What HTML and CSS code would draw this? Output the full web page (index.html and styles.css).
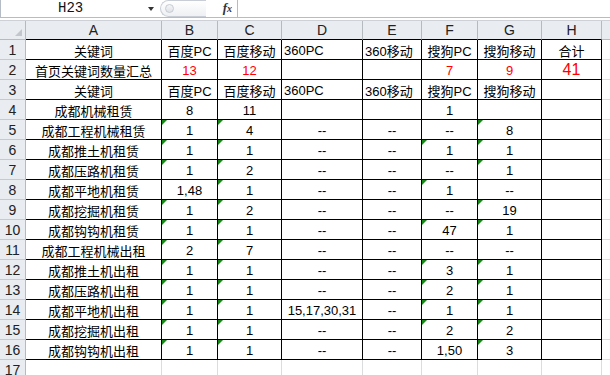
FILE: index.html
```html
<!DOCTYPE html>
<html lang="zh-CN">
<head>
<meta charset="utf-8">
<link rel="stylesheet" href="styles.css">
</head>
<body>
<div class="app">
  <div class="fbar">
    <div class="namebox"><span class="name">H23</span><span class="arrow"></span></div>
    <div class="splitter"><span class="dimple"></span></div>
    <div class="fx">f<span class="x">x</span></div>
    <div class="formula"></div>
  </div>
  <div class="gap"></div>
  <div class="sheet">
    <div class="corner"><span class="selall"></span></div>
    <div class="ch">A</div><div class="ch">B</div><div class="ch">C</div><div class="ch">D</div><div class="ch">E</div><div class="ch">F</div><div class="ch">G</div><div class="ch">H</div><div class="ch last"></div>

    <div class="rh">1</div>
    <div class="c">关键词</div><div class="c">百度PC</div><div class="c">百度移动</div><div class="c l">360PC</div><div class="c l">360移动</div><div class="c">搜狗PC</div><div class="c">搜狗移动</div><div class="c">合计</div><div class="g"></div>

    <div class="rh">2</div>
    <div class="c">首页关键词数量汇总</div><div class="c red">13</div><div class="c red">12</div><div class="c"></div><div class="c"></div><div class="c red">7</div><div class="c red">9</div><div class="c red big">41</div><div class="g"></div>

    <div class="rh">3</div>
    <div class="c">关键词</div><div class="c">百度PC</div><div class="c">百度移动</div><div class="c l">360PC</div><div class="c l">360移动</div><div class="c">搜狗PC</div><div class="c">搜狗移动</div><div class="c"></div><div class="g"></div>

    <div class="rh">4</div>
    <div class="c">成都机械租赁</div><div class="c">8</div><div class="c">11</div><div class="c"></div><div class="c"></div><div class="c">1</div><div class="c"></div><div class="c"></div><div class="g"></div>

    <div class="rh">5</div>
    <div class="c">成都工程机械租赁</div><div class="c t">1</div><div class="c t">4</div><div class="c">--</div><div class="c">--</div><div class="c">--</div><div class="c t">8</div><div class="c"></div><div class="g"></div>

    <div class="rh">6</div>
    <div class="c">成都推土机租赁</div><div class="c t">1</div><div class="c t">1</div><div class="c">--</div><div class="c">--</div><div class="c t">1</div><div class="c t">1</div><div class="c"></div><div class="g"></div>

    <div class="rh">7</div>
    <div class="c">成都压路机租赁</div><div class="c t">1</div><div class="c t">2</div><div class="c">--</div><div class="c">--</div><div class="c">--</div><div class="c t">1</div><div class="c"></div><div class="g"></div>

    <div class="rh">8</div>
    <div class="c">成都平地机租赁</div><div class="c">1,48</div><div class="c t">1</div><div class="c">--</div><div class="c">--</div><div class="c t">1</div><div class="c">--</div><div class="c"></div><div class="g"></div>

    <div class="rh">9</div>
    <div class="c">成都挖掘机租赁</div><div class="c t">1</div><div class="c t">2</div><div class="c">--</div><div class="c">--</div><div class="c">--</div><div class="c t">19</div><div class="c"></div><div class="g"></div>

    <div class="rh">10</div>
    <div class="c">成都钩钩机租赁</div><div class="c t">1</div><div class="c t">1</div><div class="c">--</div><div class="c">--</div><div class="c t">47</div><div class="c t">1</div><div class="c"></div><div class="g"></div>

    <div class="rh">11</div>
    <div class="c">成都工程机械出租</div><div class="c t">2</div><div class="c t">7</div><div class="c">--</div><div class="c">--</div><div class="c">--</div><div class="c">--</div><div class="c"></div><div class="g"></div>

    <div class="rh">12</div>
    <div class="c">成都推土机出租</div><div class="c t">1</div><div class="c t">1</div><div class="c">--</div><div class="c">--</div><div class="c t">3</div><div class="c t">1</div><div class="c"></div><div class="g"></div>

    <div class="rh">13</div>
    <div class="c">成都压路机出租</div><div class="c t">1</div><div class="c t">1</div><div class="c">--</div><div class="c">--</div><div class="c t">2</div><div class="c t">1</div><div class="c"></div><div class="g"></div>

    <div class="rh">14</div>
    <div class="c">成都平地机出租</div><div class="c t">1</div><div class="c t">1</div><div class="c">15,17,30,31</div><div class="c">--</div><div class="c t">1</div><div class="c t">1</div><div class="c"></div><div class="g"></div>

    <div class="rh">15</div>
    <div class="c">成都挖掘机出租</div><div class="c t">1</div><div class="c t">1</div><div class="c">--</div><div class="c">--</div><div class="c t">2</div><div class="c t">2</div><div class="c"></div><div class="g"></div>

    <div class="rh">16</div>
    <div class="c">成都钩钩机出租</div><div class="c t">1</div><div class="c t">1</div><div class="c">--</div><div class="c">--</div><div class="c">1,50</div><div class="c t">3</div><div class="c"></div><div class="g"></div>

    <div class="rh">17</div>
    <div class="e"></div><div class="e"></div><div class="e"></div><div class="e"></div><div class="e"></div><div class="e"></div><div class="e"></div><div class="e"></div><div class="e last"></div>
  </div>
</div>
</body>
</html>
```

FILE: styles.css
```css
* { box-sizing: border-box; }
html, body { margin: 0; padding: 0; background: #fff; }
body { width: 610px; height: 375px; overflow: hidden; font-family: "Liberation Sans", "Noto Sans CJK SC", sans-serif; }

.app { display: flex; flex-direction: column; width: 610px; }

.fbar {
  height: 18px;
  display: flex;
  border-left: 1px solid #b6bcc6;
  border-bottom: 1px solid #b6bcc6;
  background: #fff;
}
.namebox {
  width: 159px;
  display: flex;
  align-items: center;
  position: relative;
}
.name {
  font-family: "Liberation Mono", "DejaVu Sans Mono", monospace;
  font-size: 14px;
  color: #111;
  margin-left: 57px;
  line-height: 17px;
}
.arrow {
  position: absolute;
  left: 147px;
  top: 7px;
  width: 0; height: 0;
  border-left: 3px solid transparent;
  border-right: 3px solid transparent;
  border-top: 4px solid #333;
}
.splitter {
  width: 46px;
  height: 17px;
  border: 1px solid #c9ced6;
  border-right: none;
  border-radius: 9px 0 0 9px;
  background: linear-gradient(#ffffff, #eef0f3);
  position: relative;
}
.dimple {
  position: absolute;
  left: 4px; top: 3px;
  width: 9px; height: 9px;
  border-radius: 50%;
  border: 1px solid #c6cbd2;
  background: linear-gradient(#f4f5f7, #dfe2e7);
}
.fx {
  width: 32px;
  font-family: "Liberation Serif", serif;
  font-style: italic;
  font-weight: bold;
  font-size: 13px;
  color: #333;
  text-align: right;
  padding-right: 5px;
  line-height: 16px;
  border-right: 1px solid #b6bcc6;
}
.fx .x { font-size: 10px; }
.formula { flex: 1; }

.gap { height: 3px; background: #fff; border-bottom: 1px solid #cdd1d7; }

.sheet {
  display: grid;
  grid-template-columns: 26px 136px 56px 64px 81px 59px 56px 64px 60px 8px;
  grid-template-rows: 19px repeat(16, 20px) 20px;
  font-size: 13px;
  color: #000;
}

.corner {
  background: #e9ecf0;
  border-right: 1px solid #b5bac1;
  border-bottom: 1px solid #b5bac1;
  position: relative;
}
.selall {
  position: absolute;
  right: 3px; bottom: 3px;
  width: 0; height: 0;
  border-left: 7px solid transparent;
  border-bottom: 7px solid #c3c7cd;
}
.ch {
  background: #e9ecf0;
  border-right: 1px solid #b5bac1;
  border-bottom: 1px solid #000;
  display: flex;
  align-items: center;
  justify-content: center;
  color: #222;
  font-size: 14px;
}
.ch.last { border-bottom-color: #b5bac1; border-right: none; }

.rh {
  background: #e9ecf0;
  border-right: 1px solid #b5bac1;
  border-bottom: 1px solid #c5cad1;
  display: flex;
  align-items: center;
  justify-content: center;
  color: #222;
  font-size: 14px;
  padding-top: 1px;
}

.c {
  border-right: 1px solid #000;
  border-bottom: 1px solid #000;
  display: flex;
  align-items: center;
  justify-content: center;
  white-space: nowrap;
  position: relative;
  padding-top: 1px;
}
.c.l { justify-content: flex-start; padding-left: 2px; }
.c.red { color: #ff0000; }
.c.big { font-size: 16px; }
.c.t::before {
  content: "";
  position: absolute;
  left: 0; top: 0;
  width: 0; height: 0;
  border-top: 5px solid #148a14;
  border-right: 5px solid transparent;
}

.g { border-bottom: 1px solid #dadcdd; }
.e { border-right: 1px solid #dadcdd; border-bottom: 1px solid #dadcdd; }
.e.last { border-right: none; }
```
